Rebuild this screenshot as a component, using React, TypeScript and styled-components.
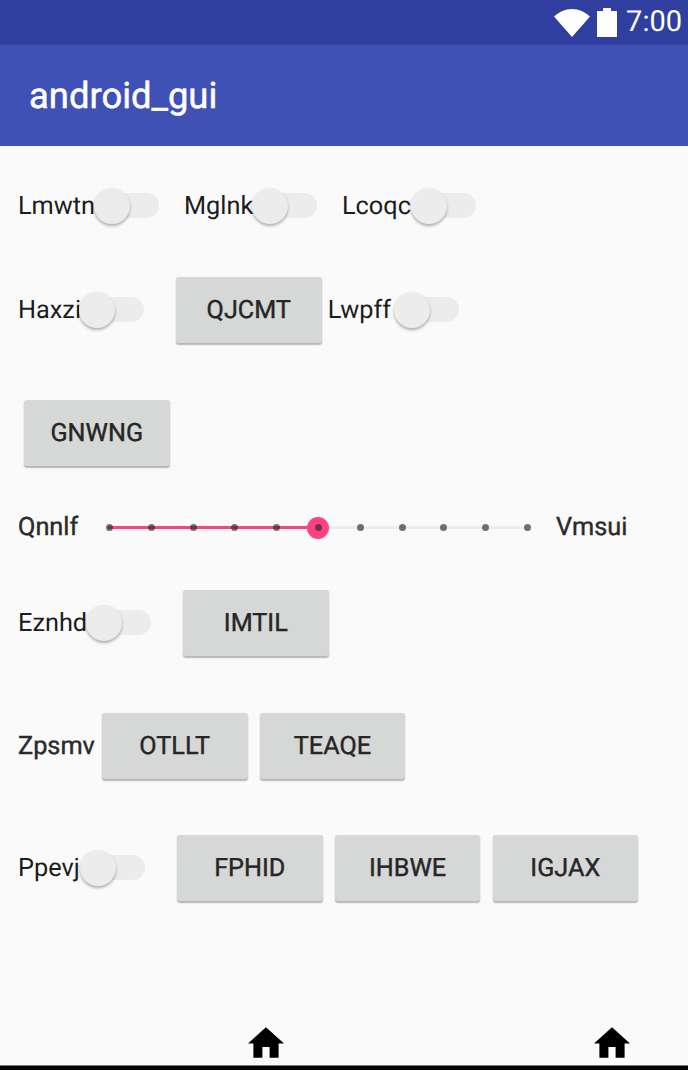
import styled, { createGlobalStyle } from "styled-components";

const GlobalStyle = createGlobalStyle`
  html, body {
    margin: 0;
    padding: 0;
    background: #fafafa;
    font-family: Roboto, "Liberation Sans", sans-serif;
    text-rendering: geometricPrecision;
  }
`;

const Screen = styled.div`
  width: 688px;
  height: 1070px;
  display: flex;
  flex-direction: column;
  overflow: hidden;
  background: #fafafa;
`;

const StatusBar = styled.div`
  height: 45px;
  background: #303f9f;
  display: flex;
  align-items: center;
  justify-content: flex-end;
  padding-right: 6px;
  color: #fff;
`;

const WifiIcon = styled.svg`
  width: 36px;
  height: 28px;
`;

const BatteryIcon = styled.svg`
  width: 20px;
  height: 29px;
  margin-left: 7px;
`;

const Clock = styled.span`
  font-size: 29px;
  margin-left: 9px;
  line-height: 45px;
`;

const Toolbar = styled.div`
  height: 101px;
  background: #3f51b5;
  display: flex;
  align-items: center;
  padding-left: 29px;
  color: #fff;
  font-size: 36.4px;
  -webkit-text-stroke: 0.5px #fff;
`;

const Content = styled.div`
  flex: 1;
  padding-left: 18px;
`;

const Row = styled.div<{ $top: number }>`
  height: 66px;
  margin-top: ${({ $top }) => $top}px;
  display: flex;
  align-items: center;
`;

const Label = styled.span<{ $w: number; $strong?: boolean }>`
  width: ${({ $w }) => $w}px;
  flex-shrink: 0;
  font-size: 25.3px;
  color: #1c1c1c;
  white-space: nowrap;
  ${({ $strong }) => $strong && "color: #2a2a2a; -webkit-text-stroke: 0.4px #2a2a2a;"}
`;

const SwitchBox = styled.div<{ $gap: number }>`
  position: relative;
  width: 65px;
  height: 36px;
  margin-right: ${({ $gap }) => $gap}px;
  flex-shrink: 0;
`;

const SwitchTrack = styled.div`
  position: absolute;
  left: 7px;
  right: 0;
  top: 5px;
  height: 25px;
  border-radius: 13px;
  background: #ececec;
`;

const SwitchThumb = styled.div`
  position: absolute;
  left: 0;
  top: 0;
  width: 36px;
  height: 36px;
  border-radius: 50%;
  background: #ececec;
  box-shadow: 0 2px 3px rgba(0, 0, 0, 0.3);
`;

const Button = styled.div`
  width: 145.5px;
  height: 65.5px;
  margin: 0 6.25px 0 6px;
  flex-shrink: 0;
  display: flex;
  align-items: center;
  justify-content: center;
  box-sizing: border-box;
  border-radius: 3px;
  background: #d6d7d7;
  box-shadow: 0 1.5px 1.5px rgba(0, 0, 0, 0.28);
  color: #262626;
  font-size: 25.2px;
  -webkit-text-stroke: 0.4px #262626;
`;

const SliderBox = styled.div`
  position: relative;
  width: 438px;
  height: 24px;
  margin: 0 18px;
  flex-shrink: 0;
`;

const SliderRail = styled.div`
  position: absolute;
  left: 8px;
  right: 10px;
  top: 11px;
  height: 3px;
  background: #ececec;
`;

const SliderFill = styled.div`
  position: absolute;
  left: 8px;
  top: 11px;
  width: 210px;
  height: 3px;
  background: #ff4081;
`;

const SliderThumb = styled.div`
  position: absolute;
  left: 207px;
  top: 1.5px;
  width: 22px;
  height: 22px;
  border-radius: 50%;
  background: #ff4081;
`;

const Tick = styled.div`
  position: absolute;
  top: 9px;
  width: 7px;
  height: 7px;
  border-radius: 50%;
  background: rgba(40, 40, 40, 0.65);
`;

const BottomNav = styled.div`
  height: 37px;
  padding: 0 0 7px 248px;
  box-sizing: border-box;
  display: flex;
  gap: 310px;
  align-items: flex-end;
`;

const HomeIcon = styled.svg`
  width: 36px;
  height: 31px;
  display: block;
`;

const BlackBar = styled.div`
  height: 5px;
  background: #000;
  border-top: 1px solid #777;
  box-sizing: border-box;
`;

const Toggle = ({ gap = 26 }: { gap?: number }) => (
  <SwitchBox $gap={gap}>
    <SwitchTrack />
    <SwitchThumb />
  </SwitchBox>
);

const Home = () => (
  <HomeIcon viewBox="2 3 20 17">
    <path d="M10 20v-6h4v6h5v-8h3L12 3 2 12h3v8z" fill="#000" />
  </HomeIcon>
);

const ticks = [0, 42, 84, 125, 167, 209, 251, 293, 334, 376, 418];

export default function App() {
  return (
    <Screen>
      <GlobalStyle />
      <StatusBar>
        <WifiIcon viewBox="0 0 36 28">
          <path d="M0 7.5C5 3 11 0 18 0s13 3 18 7.5L18 28z" fill="#fff" />
        </WifiIcon>
        <BatteryIcon viewBox="0 0 20 29">
          <path d="M6 0h8v3h6v26H0V3h6z" fill="#fff" />
        </BatteryIcon>
        <Clock>7:00</Clock>
      </StatusBar>
      <Toolbar>android_gui</Toolbar>
      <Content>
        <Row $top={27}>
          <Label $w={76}>Lmwtn</Label>
          <Toggle gap={25} />
          <Label $w={68}>Mglnk</Label>
          <Toggle gap={25} />
          <Label $w={69}>Lcoqc</Label>
          <Toggle />
        </Row>
        <Row $top={38}>
          <Label $w={61}>Haxzi</Label>
          <Toggle />
          <Button>QJCMT</Button>
          <Label $w={66}>Lwpff</Label>
          <Toggle />
        </Row>
        <Row $top={57}>
          <Button>GNWNG</Button>
        </Row>
        <Row $top={28}>
          <Label $w={64} $strong>Qnnlf</Label>
          <SliderBox>
            <SliderRail />
            <SliderFill />
            {ticks.map(x => (
              <Tick key={x} style={{ left: x + 6 }} />
            ))}
            <SliderThumb />
            <Tick style={{ left: 214.5 }} />
          </SliderBox>
          <Label $w={74} $strong>Vmsui</Label>
        </Row>
        <Row $top={30}>
          <Label $w={68}>Eznhd</Label>
          <Toggle />
          <Button>IMTIL</Button>
        </Row>
        <Row $top={57}>
          <Label $w={78} $strong>Zpsmv</Label>
          <Button>OTLLT</Button>
          <Button>TEAQE</Button>
        </Row>
        <Row $top={56}>
          <Label $w={62}>Ppevj</Label>
          <Toggle />
          <Button>FPHID</Button>
          <Button>IHBWE</Button>
          <Button>IGJAX</Button>
        </Row>
      </Content>
      <BottomNav>
        <Home />
        <Home />
      </BottomNav>
      <BlackBar />
    </Screen>
  );
}
